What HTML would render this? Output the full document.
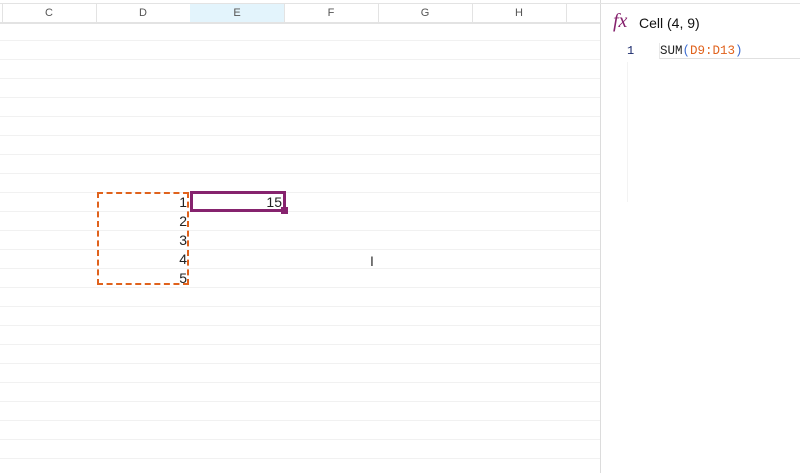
<!DOCTYPE html>
<html><head><style>
body{margin:0;width:800px;height:473px;overflow:hidden;background:#fff;font-family:"Liberation Sans",sans-serif;position:relative}
.hdr{position:absolute;top:3px;border-right:1px solid #e3e3e3;border-bottom:2px solid #e3e3e3;border-top:1px solid #e3e3e3;font-size:11px;color:#555;text-align:center;line-height:19px;box-sizing:border-box;height:21px}
.grid{position:absolute;left:0;top:22px;width:600px;height:451px;background-image:repeating-linear-gradient(to bottom,transparent 0,transparent 18px,#f1f1f1 18px,#f1f1f1 19px)}
.n{position:absolute;font-size:14px;color:#222;text-align:right;width:60px}
</style></head><body>
<div class="hdr" style="left:0;width:3px"></div>
<div class="hdr" style="left:2px;width:95px">C</div>
<div class="hdr" style="left:96px;width:95px">D</div>
<div class="hdr" style="left:190px;width:95px;background:#e3f4fc">E</div>
<div class="hdr" style="left:284px;width:95px">F</div>
<div class="hdr" style="left:378px;width:95px">G</div>
<div class="hdr" style="left:472px;width:95px">H</div>
<div class="hdr" style="left:566px;width:35px"></div>
<div class="grid"></div>
<div style="position:absolute;left:97px;top:192px;width:88px;height:89px;border:2px dashed #e0621c"></div>
<div class="n" style="left:127px;top:194px">1</div>
<div class="n" style="left:127px;top:213px">2</div>
<div class="n" style="left:127px;top:232px">3</div>
<div class="n" style="left:127px;top:251px">4</div>
<div class="n" style="left:127px;top:270px">5</div>
<div style="position:absolute;left:190px;top:191px;width:90px;height:15px;border:3px solid #86236e;background:#fff"></div>
<div class="n" style="left:222px;top:194px">15</div>
<div style="position:absolute;left:281px;top:207px;width:7px;height:7px;background:#86236e"></div>
<div style="position:absolute;left:370px;top:253px;font-size:14px;color:#333">I</div>
<div style="position:absolute;left:600px;top:0;width:200px;height:473px;border-left:1px solid #dcdcdc;background:#fff"></div>
<div style="position:absolute;left:600px;top:3px;width:200px;height:1px;background:#e3e3e3"></div>
<div style="position:absolute;left:613px;top:10px;font-family:'Liberation Serif',serif;font-style:italic;font-size:20px;color:#86236e">fx</div>
<div style="position:absolute;left:639px;top:15px;font-size:14px;color:#111">Cell (4, 9)</div>
<div style="position:absolute;left:627px;top:44px;font-family:'Liberation Mono',monospace;font-size:12px;color:#1a2a6c">1</div>
<div style="position:absolute;left:627px;top:62px;width:1px;height:140px;background:#f3f3f3"></div>
<div style="position:absolute;left:659px;top:43px;width:141px;height:15px;border-bottom:1px solid #e0e0e0;border-left:1px solid #e8e8e8;font-family:'Liberation Mono',monospace;font-size:12.5px;color:#222;line-height:16px">SUM<span style="color:#3b6cd1">(</span><span style="color:#e0621c">D9:D13</span><span style="color:#3b6cd1">)</span></div>
</body></html>
